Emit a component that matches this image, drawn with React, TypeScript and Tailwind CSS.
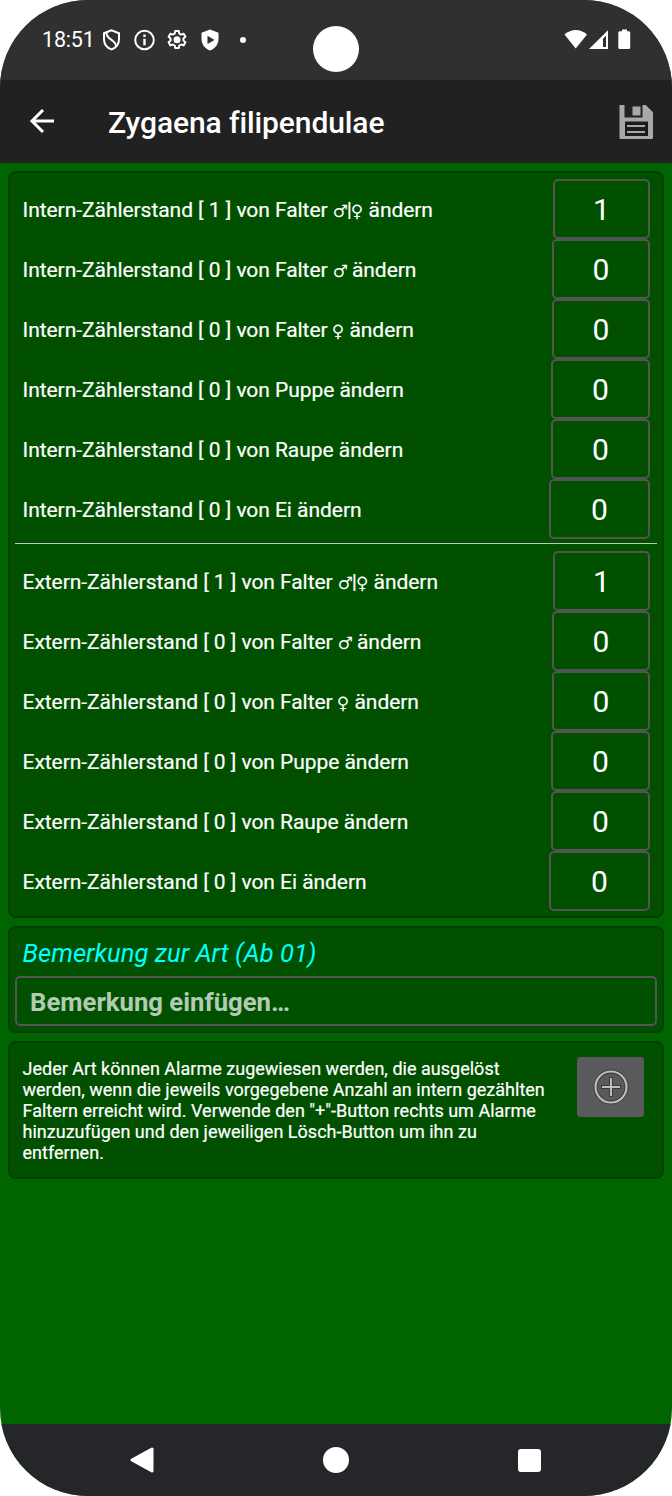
import React from 'react';

type Row = { count: number; label: React.ReactNode; width: string };

const Male = () => (
  <span className="inline-block w-[14px] font-['DejaVu_Sans'] text-[17px] leading-none tracking-normal [-webkit-text-stroke:0px]">♂</span>
);
const Female = () => (
  <span className="inline-block w-[11.500px] font-['DejaVu_Sans'] text-[17px] leading-none tracking-normal -indent-px [-webkit-text-stroke:0px]">♀</span>
);

const rows: Row[] = [
  { count: 1, label: <>Falter <Male />|<Female /></>, width: 'w-[97px]' },
  { count: 0, label: <>Falter <Male /></>, width: 'w-[98px]' },
  { count: 0, label: <>Falter <Female /></>, width: 'w-[98px]' },
  { count: 0, label: 'Puppe', width: 'w-[99px]' },
  { count: 0, label: 'Raupe', width: 'w-[99px]' },
  { count: 0, label: 'Ei', width: 'w-[101px]' },
];

function CounterRows({ kind }: { kind: string }) {
  return (
    <div className="flex flex-col">
      {rows.map((row, i) => (
        <div key={i} className="flex h-[60px] items-center justify-between pl-[12.500px] pr-[12px]">
          <span className="whitespace-nowrap pt-[2px] text-[21px] leading-[28px] tracking-[-0.050px] [-webkit-text-stroke:0.2px]">
            {kind}-Zählerstand [ {row.count} ] von {row.label} ändern
          </span>
          <div className={`${row.width} flex h-[60px] items-center justify-center rounded-[5px] border-2 border-[#545454] pt-[2px] text-[30px] leading-none`}>
            {row.count}
          </div>
        </div>
      ))}
    </div>
  );
}

function StatusBar() {
  return (
    <div className="relative flex h-[80px] shrink-0 items-center justify-between bg-[#303030] pl-[42px] pr-[41px]">
      <div className="flex items-center">
        <span className="w-[60px] text-[21.500px] leading-none tracking-[-0.2px]">18:51</span>
        <svg className="h-[22px] w-[20px]" viewBox="0 0 20 22" fill="none" stroke="white" strokeWidth="2">
          <path d="M9.500 1.300 2 4.200v6c0 4.800 3.100 8.600 7.500 10.200 4.400-1.600 7.500-5.400 7.500-10.200v-6z" />
          <path d="M4.500 3.500C4 11 13.500 10 14 17" strokeWidth="2" />
        </svg>
        <svg className="ml-[12px] h-[22px] w-[22px]" viewBox="0 0 22 22" fill="none" stroke="white" strokeWidth="2">
          <circle cx="10.500" cy="11" r="9.300" />
          <path d="M10.500 9.700v6.600M10.500 5.500v2.400" strokeWidth="2.400" />
        </svg>
        <svg className="ml-[9px] h-[24px] w-[24px]" viewBox="0 0 24 24" fill="none" stroke="white" strokeWidth="2" strokeLinejoin="round">
          <path d="M10.200 3h3.600l.5 2.600 1.800 1 2.500-.9 1.800 3.100-2 1.700v2.100l2 1.700-1.800 3.100-2.500-.9-1.800 1-.5 2.600h-3.600l-.5-2.600-1.800-1-2.500.9-1.800-3.100 2-1.700v-2.100l-2-1.700 1.800-3.100 2.500.9 1.800-1z" />
          <circle cx="12" cy="11.700" r="3.500" fill="white" stroke="none" />
        </svg>
        <svg className="ml-[12px] h-[22px] w-[18px]" viewBox="0 0 18 22">
          <path fill="white" d="M9 .5.500 3.700v6.200c0 5.300 3.600 10 8.500 11.500 4.900-1.500 8.500-6.200 8.500-11.500V3.700z" />
          <path fill="#303030" d="m6.500 6.700 7 4.200-7 4.200z" />
        </svg>
        <span className="ml-[21px] h-[6px] w-[6px] rounded-full bg-white" />
      </div>
      <div className="absolute left-[313px] top-[26px] h-[46px] w-[46px] rounded-full bg-white" />
      <svg className="h-[22px] w-[67px]" viewBox="0 0 67 22">
        <path fill="white" d="M.5 5.500C7-.500 16.500-.500 23 5.500L11.700 19.500z" />
        <path fill="white" fillRule="evenodd" d="M25 20 44 1.200V20zm14-2h3V6.800l-3 3z" />
        <path fill="white" d="M58 .5h5v1.800h1.700c.8 0 1.500.7 1.500 1.500v14.700c0 .8-.7 1.500-1.500 1.500h-8.900c-.8 0-1.500-.7-1.500-1.500V3.800c0-.8.7-1.500 1.500-1.500H58z" />
      </svg>
    </div>
  );
}

function Toolbar() {
  return (
    <div className="flex h-[83px] shrink-0 items-center bg-[#212121] pl-[29px] pr-[18px]">
      <svg className="mb-px h-[26px] w-[26px]" viewBox="0 0 26 26" fill="none" stroke="white" strokeWidth="3">
        <path d="M25 13H3M14 2 3 13l11 11" />
      </svg>
      <h1 className="ml-[53px] mt-[3px] flex-1 whitespace-nowrap text-[30px] font-medium leading-none tracking-[-0.1px]">Zygaena filipendulae</h1>
      <svg className="h-[36px] w-[36px]" viewBox="0 0 36 36">
        <path fill="#a8a8a8" d="M1.500 1h5v12.500h18V1h3.200L35 8.200V34q0 1-1 1H2.500q-1 0-1-1zM14.500 2.500h8v9h-8z" />
        <path fill="#1c1c1c" d="M7 17.500h23V32H7z" />
        <path stroke="#a8a8a8" strokeWidth="2" d="M9 22h18M9 28h18" />
      </svg>
    </div>
  );
}

const card = 'rounded-[8px] border-2 border-[#004000] bg-[#005000]';

export default function App() {
  return (
    <div className="h-[1496px] w-[672px] bg-white">
      <div className="flex h-full flex-col overflow-hidden rounded-[88px] bg-[#006400] font-['Roboto',sans-serif] text-white">
        <StatusBar />
        <Toolbar />
        <main className="flex flex-1 flex-col gap-[8px] px-[8px] pt-[8px]">
          <section className={`${card} h-[747px] pt-[5.500px]`}>
            <CounterRows kind="Intern" />
            <div className="mx-[5px] mb-[7px] mt-[4.500px] h-px bg-[#b5cbb5]" />
            <CounterRows kind="Extern" />
          </section>
          <section className={`${card} h-[107px] px-[5px] pt-[9px]`}>
            <h2 className="pl-[7.500px] text-[25.600px] italic leading-[32px] text-[#00ffff]">Bemerkung zur Art (Ab 01)</h2>
            <div className="mt-[7px] flex h-[50px] items-center rounded-[5px] border-2 border-[#545454] pl-[13px] pt-[2px] text-[25.700px] font-bold text-[#b3cbb3]">
              Bemerkung einfügen…
            </div>
          </section>
          <section className={`${card} flex h-[138px] items-start justify-between pl-[12.500px] pr-[18px] pt-[14px]`}>
            <p className="whitespace-nowrap pt-px text-[18px] leading-[21px] tracking-[0.015px] [-webkit-text-stroke:0.2px]">
              Jeder Art können Alarme zugewiesen werden, die ausgelöst<br />
              werden, wenn die jeweils vorgegebene Anzahl an intern gezählten<br />
              Faltern erreicht wird. Verwende den "+"-Button rechts um Alarme<br />
              hinzuzufügen und den jeweiligen Lösch-Button um ihn zu<br />
              entfernen.
            </p>
            <button className="flex h-[60px] w-[67px] items-center justify-center rounded-[3px] bg-[#5a595b]">
              <svg className="h-[36px] w-[36px]" viewBox="0 0 36 36" fill="none">
                <circle cx="18" cy="18" r="15.500" stroke="#393939" strokeWidth="4" />
                <path d="M18 8v20M8 18h20" stroke="#393939" strokeWidth="4" />
                <circle cx="18" cy="18" r="15.500" stroke="#bdbdbd" strokeWidth="2.200" />
                <path d="M18 9v18M9 18h18" stroke="#bdbdbd" strokeWidth="2" />
              </svg>
            </button>
          </section>
        </main>
        <nav className="flex h-[72px] shrink-0 items-center justify-between bg-[#25262a] pl-[130px] pr-[131px]">
          <svg className="h-[26px] w-[24px]" viewBox="0 0 24 26">
            <path d="M2 13 22 2v22z" fill="white" stroke="white" strokeWidth="3" strokeLinejoin="round" />
          </svg>
          <span className="h-[26px] w-[26px] rounded-full bg-white" />
          <span className="h-[23px] w-[23px] rounded-[3px] bg-white" />
        </nav>
      </div>
    </div>
  );
}
